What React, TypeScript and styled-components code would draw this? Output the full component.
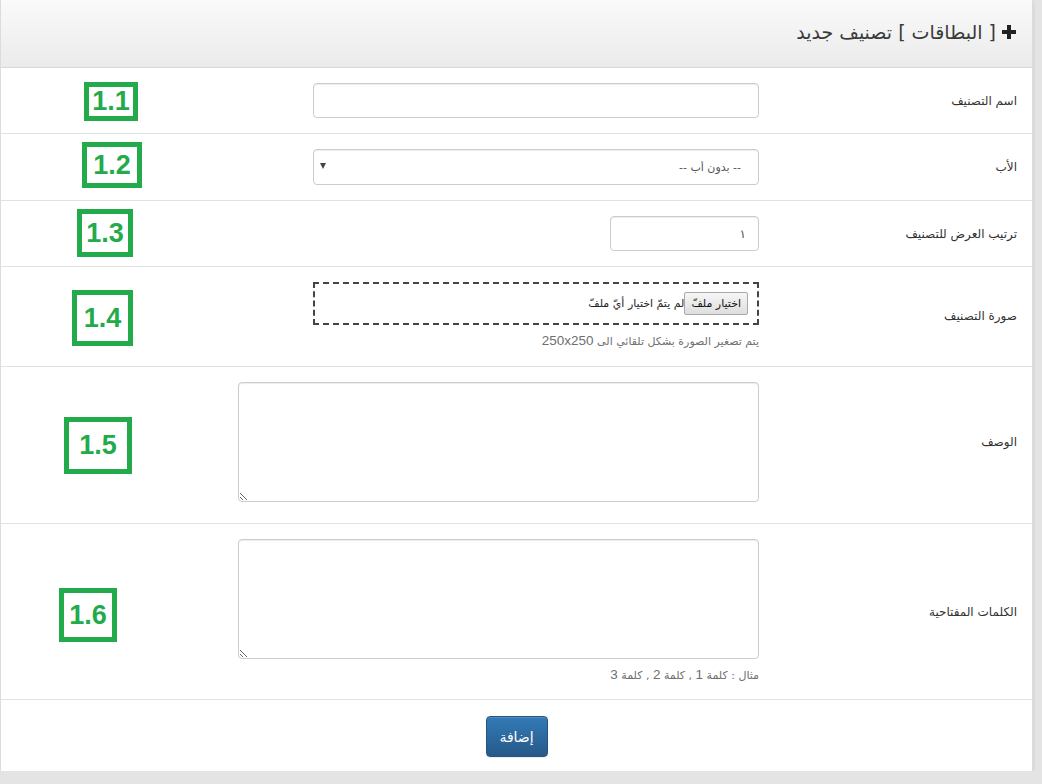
import React from "react";
import styled, { createGlobalStyle } from "styled-components";

const Global = createGlobalStyle`
  html, body { margin: 0; padding: 0; }
  body {
    background: #e4e4e4;
    font-family: "Liberation Sans", "DejaVu Sans", Arial, sans-serif;
    color: #333;
  }
  * { box-sizing: border-box; }
`;

const Panel = styled.div`
  direction: rtl;
  width: 1033px;
  background: #fff;
  border-left: 1px solid #dcdcdc;
  border-right: 1px solid #dcdcdc;
  box-shadow: 0 2px 4px rgba(0, 0, 0, 0.12);
`;

const Header = styled.div`
  height: 68px;
  display: flex;
  align-items: center;
  gap: 6px;
  padding: 0 16px 3px;
  background: linear-gradient(to bottom, #fafafa 0%, #ebebeb 100%);
  border-bottom: 1px solid #d8d8d8;
`;

const Title = styled.h3`
  margin: 0;
  font-size: 19px;
  font-weight: normal;
  color: #3a3a3a;
  font-family: "DejaVu Sans", sans-serif;
`;

const Row = styled.div<{ $pb?: number }>`
  position: relative;
  display: grid;
  grid-template-columns: 273px 521px 1fr;
  align-items: center;
  padding: 15px 0 ${(p) => p.$pb ?? 15}px;
  border-bottom: 1px solid #e2e2e2;
`;

const Label = styled.label`
  padding-right: 15px;
  font-size: 12px;
  color: #333;
  font-family: "DejaVu Sans", sans-serif;
  text-align: right;
`;

const Control = styled.div`
  display: flex;
  flex-direction: column;
  align-items: flex-start;
`;

const TextInput = styled.input<{ $w: number }>`
  width: ${(p) => p.$w}px;
  height: 35px;
  padding: 6px 12px;
  border: 1px solid #ccc;
  border-radius: 4px;
  box-shadow: inset 0 1px 1px rgba(0, 0, 0, 0.075);
  font-size: 12px;
  color: #555;
  direction: rtl;
  font-family: "DejaVu Sans", sans-serif;
  outline: none;
`;

const SelectWrap = styled.div`
  position: relative;
  width: 446px;
`;

const Select = styled.select`
  appearance: none;
  width: 446px;
  height: 36px;
  padding: 6px 17px;
  border: 1px solid #ccc;
  border-radius: 4px;
  background: #fff;
  box-shadow: inset 0 1px 1px rgba(0, 0, 0, 0.075);
  font-size: 11px;
  color: #555;
  direction: rtl;
  font-family: "DejaVu Sans", sans-serif;
  outline: none;
`;

const Caret = styled.span`
  position: absolute;
  left: 7px;
  top: 14px;
  width: 0;
  height: 0;
  border-left: 3px solid transparent;
  border-right: 3px solid transparent;
  border-top: 6px solid #444;
  pointer-events: none;
`;

const FileBox = styled.div`
  width: 446px;
  height: 43px;
  display: flex;
  align-items: flex-start;
  padding: 8px 9px 0;
  border: 2px dashed #444;
`;

const FileButton = styled.button`
  height: 23px;
  padding: 0 6px;
  border: 1px solid #a9a9a9;
  border-radius: 2px;
  background: linear-gradient(to bottom, #f6f6f6, #dedede);
  font-size: 11px;
  color: #111;
  font-family: "DejaVu Sans", sans-serif;
`;

const FileText = styled.span`
  font-size: 11px;
  line-height: 23px;
  color: #222;
  font-family: "DejaVu Sans", sans-serif;
`;

const Help = styled.p`
  margin: 8px 0 0;
  font-size: 11px;
  line-height: 16px;
  color: #6f6f6f;
  font-family: "DejaVu Sans", sans-serif;
`;

const Num = styled.span`
  font-family: "Liberation Sans", Arial, sans-serif;
  font-size: 13.5px;
`;

const TextArea = styled.textarea`
  width: 521px;
  height: 120px;
  padding: 6px 12px;
  border: 1px solid #ccc;
  border-radius: 4px;
  box-shadow: inset 0 1px 1px rgba(0, 0, 0, 0.075);
  direction: rtl;
  font-family: "DejaVu Sans", sans-serif;
  outline: none;
  display: block;
`;

const Footer = styled.div`
  display: flex;
  justify-content: center;
  padding: 16px 0 14px;
`;

const Submit = styled.button`
  width: 62px;
  height: 41px;
  border: 1px solid #245580;
  border-radius: 4px;
  background: linear-gradient(to bottom, #337ab7 0%, #265a88 100%);
  color: #fff;
  font-size: 14px;
  font-family: "DejaVu Sans", sans-serif;
  box-shadow: inset 0 1px 0 rgba(255, 255, 255, 0.15), 0 1px 1px rgba(0, 0, 0, 0.08);
`;

const Badge = styled.div<{ $l: number; $t: number; $w: number; $h: number }>`
  position: absolute;
  left: ${(p) => p.$l}px;
  top: ${(p) => p.$t}px;
  width: ${(p) => p.$w}px;
  height: ${(p) => p.$h}px;
  border: 5px solid #23ab4b;
  background: #fff;
  display: flex;
  align-items: center;
  justify-content: center;
  direction: ltr;
  color: #23ab4b;
  font-family: "Liberation Sans", Arial, sans-serif;
  font-weight: bold;
  font-size: 27px;
  line-height: 1;
`;

const PlusIcon = () => (
  <svg width="14" height="14" viewBox="0 0 14 14" aria-hidden>
    <path d="M5 0h4v5h5v4H9v5H5V9H0V5h5z" fill="#222" />
  </svg>
);

export default function App() {
  return (
    <>
      <Global />
      <Panel>
        <Header>
          <PlusIcon />
          <Title>[ البطاقات ] تصنيف جديد</Title>
        </Header>

        <Row>
          <Label>اسم التصنيف</Label>
          <Control>
            <TextInput $w={446} />
          </Control>
          <Badge $l={83} $t={14} $w={54} $h={39}>1.1</Badge>
        </Row>

        <Row>
          <Label>الأب</Label>
          <Control>
            <SelectWrap>
              <Select defaultValue="0">
                <option value="0">-- بدون أب --</option>
              </Select>
              <Caret />
            </SelectWrap>
          </Control>
          <Badge $l={81} $t={8} $w={60} $h={46}>1.2</Badge>
        </Row>

        <Row>
          <Label>ترتيب العرض للتصنيف</Label>
          <Control>
            <TextInput $w={149} defaultValue="١" />
          </Control>
          <Badge $l={76} $t={8} $w={56} $h={48}>1.3</Badge>
        </Row>

        <Row $pb={16}>
          <Label>صورة التصنيف</Label>
          <Control>
            <FileBox>
              <FileButton>اختيار ملفّ</FileButton>
              <FileText>لم يتمّ اختيار أيّ ملفّ</FileText>
            </FileBox>
            <Help>
              يتم تصغير الصورة بشكل تلقائي الى <Num>250x250</Num>
            </Help>
          </Control>
          <Badge $l={71} $t={23} $w={61} $h={56}>1.4</Badge>
        </Row>

        <Row $pb={21}>
          <Label>الوصف</Label>
          <Control>
            <TextArea />
          </Control>
          <Badge $l={63} $t={50} $w={68} $h={57}>1.5</Badge>
        </Row>

        <Row $pb={15}>
          <Label>الكلمات المفتاحية</Label>
          <Control>
            <TextArea />
            <Help>
              مثال : كلمة <Num>1</Num> , كلمة <Num>2</Num> , كلمة <Num>3</Num>
            </Help>
          </Control>
          <Badge $l={58} $t={64} $w={58} $h={54}>1.6</Badge>
        </Row>

        <Footer>
          <Submit>إضافة</Submit>
        </Footer>
      </Panel>
    </>
  );
}
